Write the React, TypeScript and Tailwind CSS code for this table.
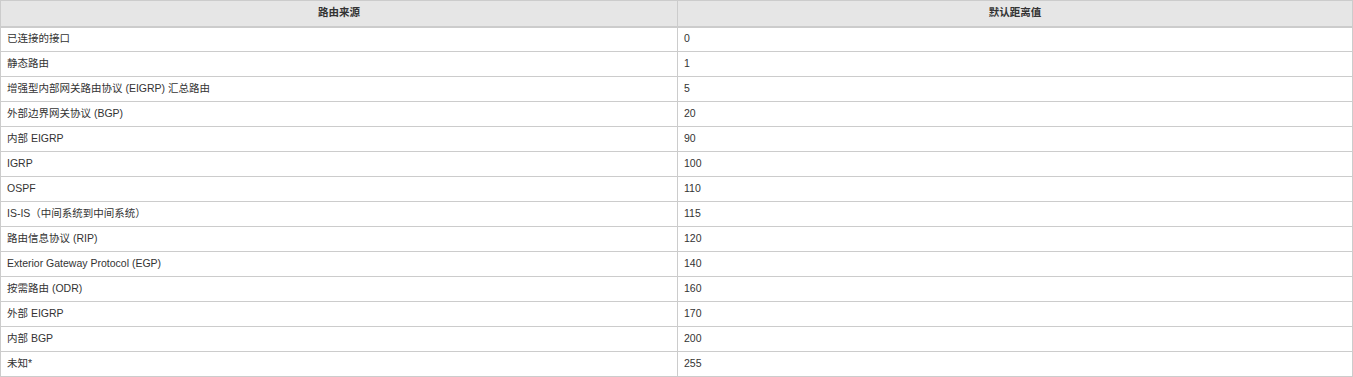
const routes: [string, number][] = [
  ['已连接的接口', 0],
  ['静态路由', 1],
  ['增强型内部网关路由协议 (EIGRP) 汇总路由', 5],
  ['外部边界网关协议 (BGP)', 20],
  ['内部 EIGRP', 90],
  ['IGRP', 100],
  ['OSPF', 110],
  ['IS-IS（中间系统到中间系统）', 115],
  ['路由信息协议 (RIP)', 120],
  ['Exterior Gateway Protocol (EGP)', 140],
  ['按需路由 (ODR)', 160],
  ['外部 EIGRP', 170],
  ['内部 BGP', 200],
  ['未知*', 255],
];

export default function App() {
  return (
    <div className="bg-white" style={{ fontFamily: '"Liberation Sans", "Noto Sans CJK SC", sans-serif' }}>
      <table className="w-[1353px] border-collapse table-fixed text-[10.5px] text-[#333]">
        <colgroup>
          <col className="w-[677px]" />
          <col />
        </colgroup>
        <thead>
          <tr className="h-[26px] bg-[#e6e6e6]">
            <th className="border border-[#cccccc] border-b-2 font-bold text-center px-[5px]">路由来源</th>
            <th className="border border-[#cccccc] border-b-2 font-bold text-center px-[5px]">默认距离值</th>
          </tr>
        </thead>
        <tbody>
          {routes.map(([source, distance]) => (
            <tr key={source} className="h-[25px]">
              <td className="border border-[#cccccc] px-[6px] text-left">{source}</td>
              <td className="border border-[#cccccc] px-[6px] text-left">{distance}</td>
            </tr>
          ))}
        </tbody>
      </table>
    </div>
  );
}
